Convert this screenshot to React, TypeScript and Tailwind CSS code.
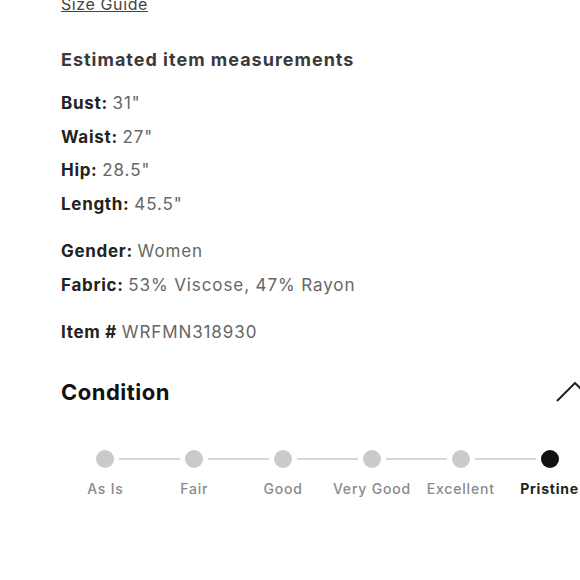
const measurements = [
  { label: "Bust:", value: "31\"" },
  { label: "Waist:", value: "27\"" },
  { label: "Hip:", value: "28.5\"" },
  { label: "Length:", value: "45.5\"" },
]

const details = [
  { label: "Gender:", value: "Women" },
  { label: "Fabric:", value: "53% Viscose, 47% Rayon" },
]

const conditions = ["As Is", "Fair", "Good", "Very Good", "Excellent", "Pristine"]
const current = 5

function Row({ label, value }: { label: string; value: string }) {
  return (
    <p className="text-[17px] leading-[24px]">
      <span className="font-bold tracking-[0.7px] text-[#222]">{label}</span>{" "}
      <span className="tracking-[0.9px] text-[#666]">{value}</span>
    </p>
  )
}

function ConditionScale() {
  return (
    <div className="grid grid-cols-6">
      {conditions.map((c, i) => {
        const active = i === current
        return (
          <div key={c} className="flex flex-col items-center">
            <div className="flex w-full items-center">
              <div className="flex-1 pr-[5px]">
                {i > 0 && <div className="h-[2px] bg-[#d6d6d6]" />}
              </div>
              <div
                className={
                  active
                    ? "h-[18px] w-[18px] rounded-full bg-[#111]"
                    : "h-[18px] w-[18px] rounded-full bg-[#cacaca]"
                }
              />
              <div className="flex-1 pl-[5px]">
                {i < conditions.length - 1 && <div className="h-[2px] bg-[#d6d6d6]" />}
              </div>
            </div>
            <span
              className={
                active
                  ? "mt-[11px] text-[14px] leading-[20px] font-bold tracking-[0.8px] text-[#222]"
                  : "mt-[11px] text-[14px] leading-[20px] font-medium tracking-[0.8px] text-[#8a8a8a]"
              }
            >
              {c}
            </span>
          </div>
        )
      })}
    </div>
  )
}

export default function App() {
  return (
    <div className="h-[580px] w-[580px] overflow-hidden bg-white font-['Inter',sans-serif]">
      <div className="-mt-[8px] w-[594px] pl-[61px]">
        <a className="block text-[16px] leading-[24px] tracking-[0.6px] text-[#444] underline">
          Size Guide
        </a>

        <h3 className="mt-[30px] text-[18px] leading-[28px] font-bold tracking-[1px] text-[#3a3a3a]">
          Estimated item measurements
        </h3>

        <div className="mt-[17px] flex flex-col gap-[9.5px]">
          {measurements.map((m) => (
            <Row key={m.label} {...m} />
          ))}
        </div>

        <div className="mt-[23.5px] flex flex-col gap-[10px]">
          {details.map((d) => (
            <Row key={d.label} {...d} />
          ))}
        </div>

        <div className="mt-[23px]">
          <Row label="Item #" value="WRFMN318930" />
        </div>

        <div className="mt-[32px] flex items-center justify-between">
          <h2 className="text-[22px] leading-[32px] font-bold tracking-[0.5px] text-[#111]">
            Condition
          </h2>
          <svg width="38" height="20" viewBox="0 0 38 20" fill="none">
            <polyline points="1,19 19,1 37,19" stroke="#222" strokeWidth="2" />
          </svg>
        </div>

        <div className="mt-[42px]">
          <ConditionScale />
        </div>
      </div>
    </div>
  )
}
